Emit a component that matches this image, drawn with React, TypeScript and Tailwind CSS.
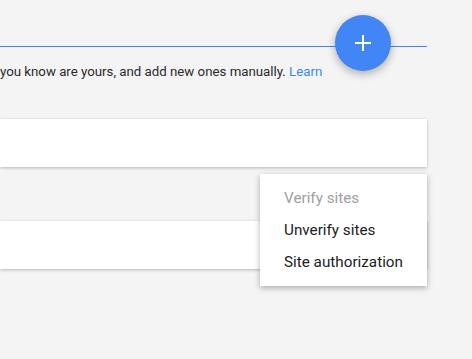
const menuItems = [
  { label: "Verify sites", disabled: true },
  { label: "Unverify sites", disabled: false },
  { label: "Site authorization", disabled: false },
];

const App = () => {
  return (
    <div className="relative h-[359px] w-[472px] overflow-hidden bg-[#f4f4f4] font-['Roboto',sans-serif]">
      <div className="w-[427px]">
        <div className="h-[47px] border-b border-solid border-b-[#4285f4]" />
        <p className="mt-[15px] whitespace-nowrap text-[13.25px] leading-[20px] text-[#2a2a2a]">
          you know are yours, and add new ones manually. <span className="text-[#4285f4]">Learn</span>
        </p>
        <div className="mt-[37px] h-[48px] bg-white shadow-[0_1px_3px_rgba(0,0,0,0.25)]" />
        <div className="mt-[54px] h-[48px] bg-white shadow-[0_1px_3px_rgba(0,0,0,0.25)]" />
      </div>

      <button className="absolute left-[335px] top-[15px] flex h-[56px] w-[56px] items-center justify-center rounded-full bg-[#4285f4] shadow-[0_3px_8px_rgba(0,0,0,0.3)]">
        <svg width="18" height="18" viewBox="0 0 18 18">
          <path d="M9 1v16M1 9h16" stroke="white" strokeWidth="2" />
        </svg>
      </button>

      <div className="absolute left-[260px] top-[174px] w-[167px] bg-white py-2 shadow-[0_2px_6px_rgba(0,0,0,0.3)]">
        {menuItems.map((item) => (
          <div
            key={item.label}
            className={`flex h-[32px] items-center px-6 text-[15.25px] ${item.disabled ? "text-[#a0a0a0]" : "text-[#212121]"}`}
          >
            {item.label}
          </div>
        ))}
      </div>
    </div>
  );
};

export default App;
